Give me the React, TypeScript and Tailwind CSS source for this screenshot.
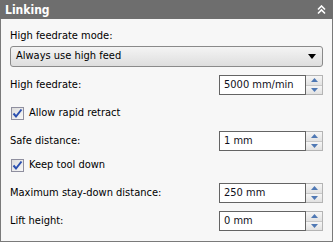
import React from 'react';

const font = { fontFamily: '"DejaVu Sans Condensed", "Liberation Sans", Arial, sans-serif' };

const Spin = ({ value }: { value: string }) => (
  <div className="flex h-[20px] w-[104px]">
    <div className="flex flex-1 items-center border border-[#646464] bg-white pl-[4px] text-[11px] text-[#101020]">
      {value}
    </div>
    <div className="flex w-[17px] flex-col border border-l-0 border-[#b4b4b4] bg-[#ececec]">
      <div className="flex flex-1 items-center justify-center border-b border-[#c8c8c8] bg-gradient-to-b from-[#f6f6f6] to-[#e2e2e2]">
        <svg width="7" height="4" viewBox="0 0 7 4">
          <path d="M0 4 L3.5 0 L7 4 Z" fill="#4f78b4" />
        </svg>
      </div>
      <div className="flex flex-1 items-center justify-center bg-gradient-to-b from-[#f6f6f6] to-[#e2e2e2]">
        <svg width="7" height="4" viewBox="0 0 7 4">
          <path d="M0 0 L7 0 L3.5 4 Z" fill="#4f78b4" />
        </svg>
      </div>
    </div>
  </div>
);

const SpinRow = ({ label, value, className }: { label: string; value: string; className?: string }) => (
  <div className={`flex items-center justify-between ${className ?? ''}`}>
    <span className="text-[11px] text-black">{label}</span>
    <Spin value={value} />
  </div>
);

const Check = ({ label, className }: { label: string; className?: string }) => (
  <div className={`flex h-[16px] items-center ${className ?? ''}`}>
    <div className="ml-[1px] flex h-[13px] w-[13px] items-center justify-center border border-[#8f8f9f] bg-gradient-to-br from-[#dcdcdc] to-[#f8f8f8]">
      <svg width="11" height="11" viewBox="0 0 11 11">
        <path d="M1.5 5.5 L4 8.5 L9.5 1.5" stroke="#2a4fb0" strokeWidth="2" fill="none" />
      </svg>
    </div>
    <span className="ml-[5px] text-[11px] text-black">{label}</span>
  </div>
);

export default function App() {
  return (
    <div className="flex h-[242px] w-[333px] flex-col bg-[#f7f7f7]" style={font}>
      <div className="flex h-[19px] shrink-0 items-center justify-between bg-[#6e6e6e] pl-[5px] pr-[7px]">
        <span className="text-[12px] font-bold text-white">Linking</span>
        <svg width="9" height="10" viewBox="0 0 9 10">
          <path d="M1 4.5 L4.5 1 L8 4.5 M1 8.5 L4.5 5 L8 8.5" stroke="white" strokeWidth="1.6" fill="none" />
        </svg>
      </div>
      <div className="flex flex-1 flex-col border border-t-0 border-[#7a7a7a] px-[9px] pt-[10px]">
        <div className="h-[14px] text-[11px] leading-[14px] text-black">High feedrate mode:</div>
        <div className="mt-[3px] flex h-[21px] items-center justify-between rounded-[3px] border border-[#8a8a8a] bg-gradient-to-b from-[#f4f4f4] to-[#dedede] pl-[5px] pr-[6px]">
          <span className="text-[11px] text-black">Always use high feed</span>
          <svg width="8" height="5" viewBox="0 0 8 5">
            <path d="M0 0 L8 0 L4 5 Z" fill="black" />
          </svg>
        </div>
        <SpinRow className="mt-[8px]" label="High feedrate:" value="5000 mm/min" />
        <Check className="mt-[10px]" label="Allow rapid retract" />
        <SpinRow className="mt-[10px]" label="Safe distance:" value="1 mm" />
        <Check className="mt-[6px]" label="Keep tool down" />
        <SpinRow className="mt-[10px]" label="Maximum stay-down distance:" value="250 mm" />
        <SpinRow className="mt-[8px]" label="Lift height:" value="0 mm" />
      </div>
    </div>
  );
}
